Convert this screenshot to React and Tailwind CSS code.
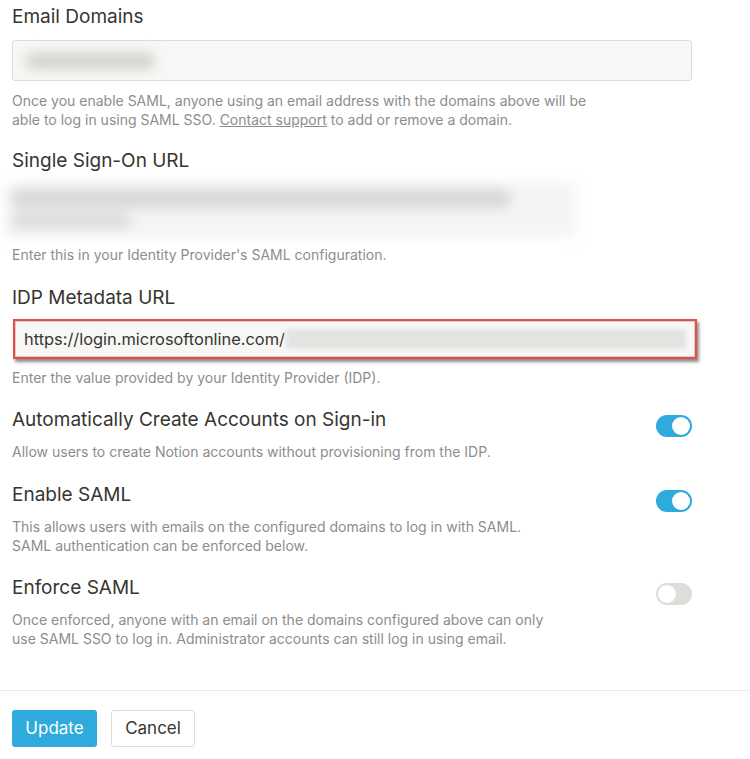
import React from "react";

function Toggle({ on }) {
  return (
    <div
      className={
        "mt-[7px] flex h-[22px] w-9 shrink-0 items-center rounded-full p-[2px] " +
        (on ? "justify-end bg-[#2eaadc]" : "justify-start bg-[#deddd9]")
      }
    >
      <div className="h-[18px] w-[18px] rounded-full bg-white" />
    </div>
  );
}

function ToggleRow({ title, on, mt, children }) {
  return (
    <div className={"flex items-start justify-between " + mt}>
      <div>
        <h2 className="text-[19px] leading-6">{title}</h2>
        <p className="mt-[10px] text-[14px] leading-[19px] text-[#8d8d8b]">
          {children}
        </p>
      </div>
      <Toggle on={on} />
    </div>
  );
}

export default function App() {
  return (
    <div className="h-[759px] w-[750px] overflow-hidden bg-white font-['Inter',sans-serif] text-[#37352f]">
      <div className="pl-3 pr-[58px] pt-[5px]">
        {/* Email Domains */}
        <h2 className="text-[19px] leading-6">Email Domains</h2>
        <div className="mt-[11px] flex h-[41px] items-center rounded-[3px] border border-[#dcdcda] bg-[#f7f7f5] px-3">
          <div className="h-[16px] w-[130px] rounded-full bg-[#d2d2cf] blur-[6px]" />
        </div>
        <p className="mt-[10px] text-[14px] leading-[19px] text-[#8d8d8b]">
          Once you enable SAML, anyone using an email address with the domains above will be
          <br />
          able to log in using SAML SSO.{" "}
          <span className="underline">Contact support</span> to add or remove a domain.
        </p>

        {/* Single Sign-On URL */}
        <h2 className="mt-[20px] text-[19px] leading-6">Single Sign-On URL</h2>
        <div className="-ml-[7px] mt-[9px] flex h-[55px] w-[570px] flex-col gap-[4px] bg-[#f4f4f4] px-[6px] py-[7px] blur-[6px]">
          <div className="h-[20px] w-[500px] rounded-full bg-[#d8d8d8]" />
          <div className="h-[18px] w-[120px] rounded-full bg-[#dedede]" />
        </div>
        <p className="mt-[8px] text-[14px] leading-[19px] text-[#8d8d8b]">
          Enter this in your Identity Provider's SAML configuration.
        </p>

        {/* IDP Metadata URL */}
        <h2 className="mt-[22px] text-[19px] leading-6">IDP Metadata URL</h2>
        <div className="ml-px mt-[9px] h-[40px] w-[684px] border-2 border-[#ea4b42] shadow-[2px_3px_3px_rgba(0,0,0,0.45)]">
          <div className="flex h-full items-center border border-[#cfcfcd] bg-[#f7f7f5] pl-[8px] pr-[8px]">
            <span className="whitespace-nowrap text-[16.4px]">
              https://login.microsoftonline.com/
            </span>
            <div className="ml-px h-[20px] flex-1 bg-[#e3e3e1] blur-[2px]" />
          </div>
        </div>
        <p className="mt-[9px] text-[14px] leading-[19px] text-[#8d8d8b]">
          Enter the value provided by your Identity Provider (IDP).
        </p>

        <ToggleRow title="Automatically Create Accounts on Sign-in" on mt="mt-[21px]">
          Allow users to create Notion accounts without provisioning from the IDP.
        </ToggleRow>

        <ToggleRow title="Enable SAML" on mt="mt-[22px]">
          This allows users with emails on the configured domains to log in with SAML.
          <br />
          SAML authentication can be enforced below.
        </ToggleRow>

        <ToggleRow title="Enforce SAML" on={false} mt="mt-[21px]">
          Once enforced, anyone with an email on the domains configured above can only
          <br />
          use SAML SSO to log in. Administrator accounts can still log in using email.
        </ToggleRow>
      </div>

      {/* Footer */}
      <div className="mt-[42px] border-t border-[#ebebea] pl-3 pt-[19px]">
        <div className="flex gap-[14px]">
          <button className="h-[37px] w-[85px] rounded-[3px] bg-[#2eaadc] text-[17px] text-white">
            Update
          </button>
          <button className="h-[37px] w-[84px] rounded-[3px] border border-[#dcdcda] bg-white text-[17px] text-[#37352f]">
            Cancel
          </button>
        </div>
      </div>
    </div>
  );
}
